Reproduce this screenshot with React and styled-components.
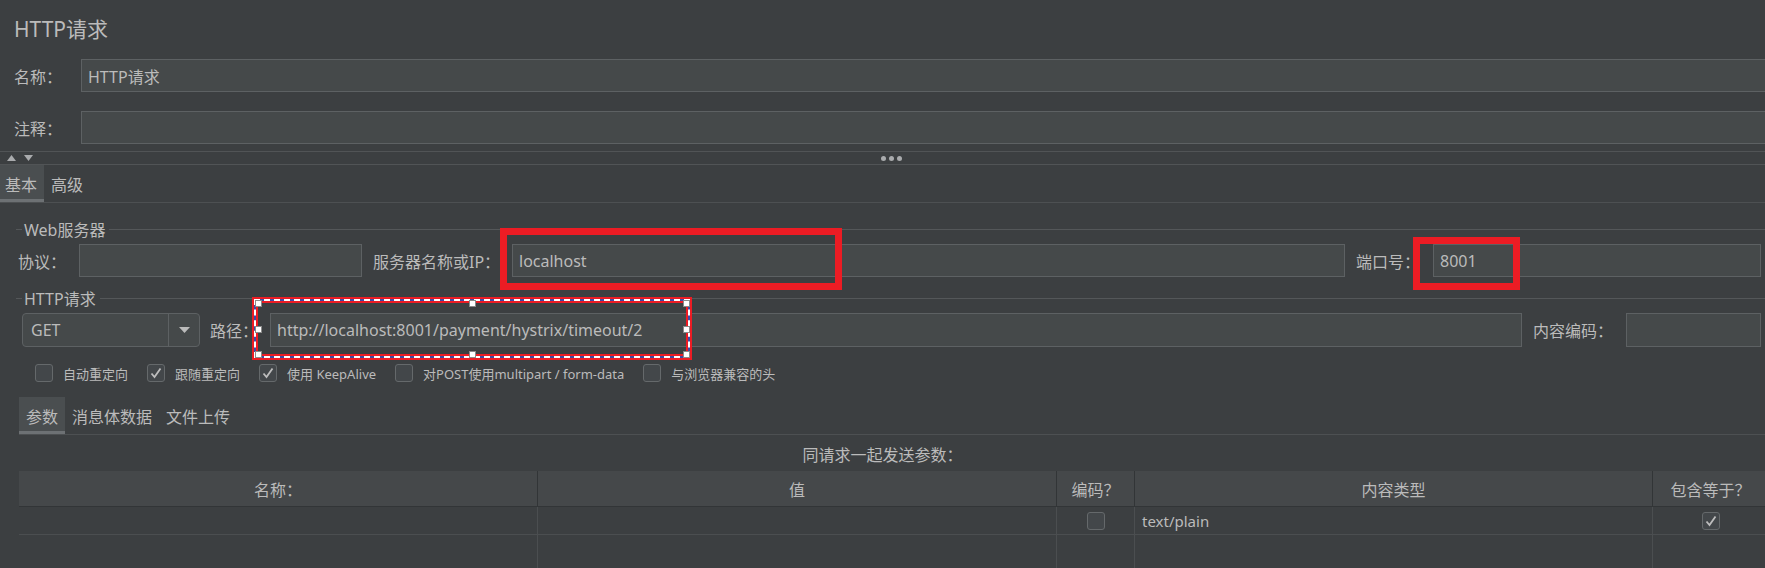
import React from "react";
import styled, { createGlobalStyle } from "styled-components";

const GlobalStyle = createGlobalStyle`
  html, body {
    margin: 0;
    padding: 0;
    background: #3c3f41;
  }
  body {
    font-family: "Noto Sans", "Noto Sans CJK SC", sans-serif;
    color: #bbbbbb;
  }
`;

const RED = "#ec1c24";

const Page = styled.div`
  width: 1765px;
  height: 568px;
  overflow: hidden;
  background: #3c3f41;
  display: flex;
  flex-direction: column;

  & > * {
    flex-shrink: 0;
  }
`;

const Title = styled.div`
  height: 56px;
  padding-left: 14px;
  display: flex;
  align-items: center;
  font-size: 21px;
`;

const LabeledRow = styled.div`
  display: grid;
  grid-template-columns: 67px 1fr;
  align-items: center;
  padding-left: 14px;
  margin-top: ${(p) => p.$top}px;
  margin-right: -3px;
`;

const Label = styled.span`
  font-size: 16px;
  white-space: nowrap;
  padding-left: ${(p) => p.$pad || 0}px;
`;

const Field = styled.div`
  height: ${(p) => p.$h || 33}px;
  box-sizing: border-box;
  background: #45494a;
  border: 1px solid #5d6163;
  display: flex;
  align-items: center;
  padding-left: 6px;
  font-size: 16px;
  color: #bbbbbb;
  white-space: nowrap;
  overflow: hidden;
`;

const Splitter = styled.div`
  margin-top: 7px;
  height: 12px;
  border-top: 1px solid #515456;
  border-bottom: 1px solid #515456;
  display: grid;
  grid-template-columns: 1fr auto 1fr;
  align-items: center;
`;

const Arrows = styled.div`
  display: flex;
  gap: 8px;
  padding-left: 7px;
`;

const Dots = styled.div`
  display: flex;
  gap: 3px;
  padding-left: 18px;

  span {
    width: 5px;
    height: 5px;
    border-radius: 50%;
    background: #a9abad;
  }
`;

const TabBar = styled.div`
  display: flex;
  height: 37px;
  border-bottom: 1px solid #4d5052;
  margin-left: ${(p) => p.$inset || 0}px;
  margin-top: ${(p) => p.$top || 0}px;
`;

const Tab = styled.div`
  padding: 0 7px 0 ${(p) => (p.$first ? 5 : 7)}px;
  display: flex;
  align-items: center;
  font-size: 16px;
  background: ${(p) => (p.$active ? "#4a4e50" : "transparent")};
  box-shadow: ${(p) => (p.$active ? "inset 0 -3px 0 #6d7174" : "none")};
`;

const GroupTitle = styled.div`
  display: flex;
  align-items: center;
  height: 20px;
  margin-top: ${(p) => p.$top}px;
  padding-left: 16px;
  font-size: 16px;

  &::before {
    content: "";
    width: 6px;
    height: 1px;
    background: #545759;
    margin-right: 2px;
  }
  &::after {
    content: "";
    flex: 1;
    height: 1px;
    background: #545759;
    margin-left: 4px;
  }
`;

const ServerRow = styled.div`
  position: relative;
  display: grid;
  grid-template-columns: 61px 283px 150px 833px 88px 328px;
  align-items: center;
  margin-top: 5px;
  padding-left: 18px;
`;

const PathRow = styled.div`
  position: relative;
  display: grid;
  grid-template-columns: 178px 70px 1252px 104px 135px;
  align-items: center;
  margin-top: 5px;
  padding-left: 22px;
`;

const Combo = styled.div`
  height: 34px;
  box-sizing: border-box;
  border: 1px solid #5d6163;
  border-radius: 4px;
  background: #45494a;
  display: grid;
  grid-template-columns: 1fr 31px;
  font-size: 16px;
`;

const ComboText = styled.div`
  display: flex;
  align-items: center;
  padding-left: 8px;
`;

const ComboButton = styled.div`
  border-left: 1px solid #5d6163;
  display: flex;
  align-items: center;
  justify-content: center;
`;

const HighlightBox = styled.div`
  position: absolute;
  box-sizing: border-box;
  border: 7px solid ${RED};
  pointer-events: none;
`;

const Selection = styled.div`
  position: absolute;
  left: 252px;
  top: -16px;
  width: 440px;
  height: 63px;
  box-sizing: border-box;
  border: 6px solid ${RED};
  pointer-events: none;

  &::before,
  &::after {
    content: "";
    position: absolute;
    inset: -4px;
    border: 2px solid #3d4aa6;
  }
  &::after {
    border: 2px dashed #ffffff;
  }
`;

const Handle = styled.span`
  position: absolute;
  left: ${(p) => p.$x}%;
  top: ${(p) => p.$y}%;
  width: 5px;
  height: 5px;
  margin: -3px 0 0 -3px;
  background: #ffffff;
  border: 1px solid #8a8a8a;
  z-index: 2;
`;

const CheckRow = styled.div`
  display: flex;
  align-items: center;
  height: 26px;
  margin-top: 13px;
  padding-left: 35px;
  gap: 19px;
`;

const CheckItem = styled.label`
  display: flex;
  align-items: center;
  gap: 10px;
  font-size: 13px;
  white-space: nowrap;
`;

const Box = styled.span`
  width: 18px;
  height: 18px;
  box-sizing: border-box;
  border: 1px solid #65696b;
  border-radius: 3px;
  background: #43474a;
  display: inline-flex;
  align-items: center;
  justify-content: center;
`;

const Caption = styled.div`
  text-align: center;
  font-size: 16px;
  line-height: 20px;
  padding: 10px 0 6px;
`;

const Table = styled.div`
  margin-left: 19px;
  display: grid;
  grid-template-columns: 519px 519px 78px 518px 116px;
`;

const HeadCell = styled.div`
  height: 35px;
  background: #45484a;
  border-right: 1px solid #323537;
  border-bottom: 1px solid #323537;
  display: flex;
  align-items: center;
  justify-content: center;
  font-size: 16px;
`;

const Cell = styled.div`
  height: ${(p) => p.$h || 27}px;
  border-right: 1px solid #4b4e50;
  border-bottom: 1px solid #4b4e50;
  display: flex;
  align-items: center;
  justify-content: ${(p) => (p.$center ? "center" : "flex-start")};
  padding-left: ${(p) => (p.$center ? 0 : 7)}px;
  font-size: 15px;
`;

const Tick = () => (
  <svg width="14" height="14" viewBox="0 0 14 14">
    <polyline
      points="2.5,7.5 5.5,11 11.5,2.5"
      fill="none"
      stroke="#bdbdbd"
      strokeWidth="1.8"
    />
  </svg>
);

const Check = ({ checked, children }) => (
  <CheckItem>
    <Box>{checked && <Tick />}</Box>
    {children}
  </CheckItem>
);

const handles = [
  [0, 0], [50, 0], [100, 0],
  [0, 50], [100, 50],
  [0, 100], [50, 100], [100, 100],
];

export default function App() {
  return (
    <Page>
      <GlobalStyle />
      <Title>HTTP请求</Title>

      <LabeledRow $top={3}>
        <Label>名称：</Label>
        <Field>HTTP请求</Field>
      </LabeledRow>
      <LabeledRow $top={19}>
        <Label>注释：</Label>
        <Field />
      </LabeledRow>

      <Splitter>
        <Arrows>
          <svg width="9" height="6" viewBox="0 0 9 6">
            <polygon points="0,6 4.5,0 9,6" fill="#a9abad" />
          </svg>
          <svg width="9" height="6" viewBox="0 0 9 6">
            <polygon points="0,0 9,0 4.5,6" fill="#a9abad" />
          </svg>
        </Arrows>
        <Dots>
          <span />
          <span />
          <span />
        </Dots>
        <div />
      </Splitter>

      <TabBar>
        <Tab $active $first>基本</Tab>
        <Tab>高级</Tab>
      </TabBar>

      <GroupTitle $top={16}>Web服务器</GroupTitle>
      <ServerRow>
        <Label>协议：</Label>
        <Field />
        <Label $pad={11}>服务器名称或IP：</Label>
        <Field>localhost</Field>
        <Label $pad={11}>端口号：</Label>
        <Field>8001</Field>
        <HighlightBox style={{ left: 500, top: -16, width: 342, height: 62 }} />
        <HighlightBox style={{ left: 1413, top: -7, width: 107, height: 53 }} />
      </ServerRow>

      <GroupTitle $top={11}>HTTP请求</GroupTitle>
      <PathRow>
        <Combo>
          <ComboText>GET</ComboText>
          <ComboButton>
            <svg width="11" height="6" viewBox="0 0 11 6">
              <polygon points="0,0 11,0 5.5,6" fill="#bbbbbb" />
            </svg>
          </ComboButton>
        </Combo>
        <Label $pad={10}>路径：</Label>
        <Field $h={34}>http://localhost:8001/payment/hystrix/timeout/2</Field>
        <Label $pad={11}>内容编码：</Label>
        <Field $h={34} />
        <Selection>
          {handles.map(([x, y]) => (
            <Handle key={`${x}-${y}`} $x={x} $y={y} />
          ))}
        </Selection>
      </PathRow>

      <CheckRow>
        <Check>自动重定向</Check>
        <Check checked>跟随重定向</Check>
        <Check checked>使用 KeepAlive</Check>
        <Check>对POST使用multipart / form-data</Check>
        <Check>与浏览器兼容的头</Check>
      </CheckRow>

      <TabBar $inset={19} $top={11}>
        <Tab $active>参数</Tab>
        <Tab>消息体数据</Tab>
        <Tab>文件上传</Tab>
      </TabBar>

      <Caption>同请求一起发送参数：</Caption>

      <Table>
        <HeadCell>名称：</HeadCell>
        <HeadCell>值</HeadCell>
        <HeadCell>编码？</HeadCell>
        <HeadCell>内容类型</HeadCell>
        <HeadCell>包含等于？</HeadCell>

        <Cell />
        <Cell />
        <Cell $center>
          <Box />
        </Cell>
        <Cell>text/plain</Cell>
        <Cell $center>
          <Box>
            <Tick />
          </Box>
        </Cell>

        <Cell $h={40} />
        <Cell $h={40} />
        <Cell $h={40} />
        <Cell $h={40} />
        <Cell $h={40} />
      </Table>
    </Page>
  );
}
